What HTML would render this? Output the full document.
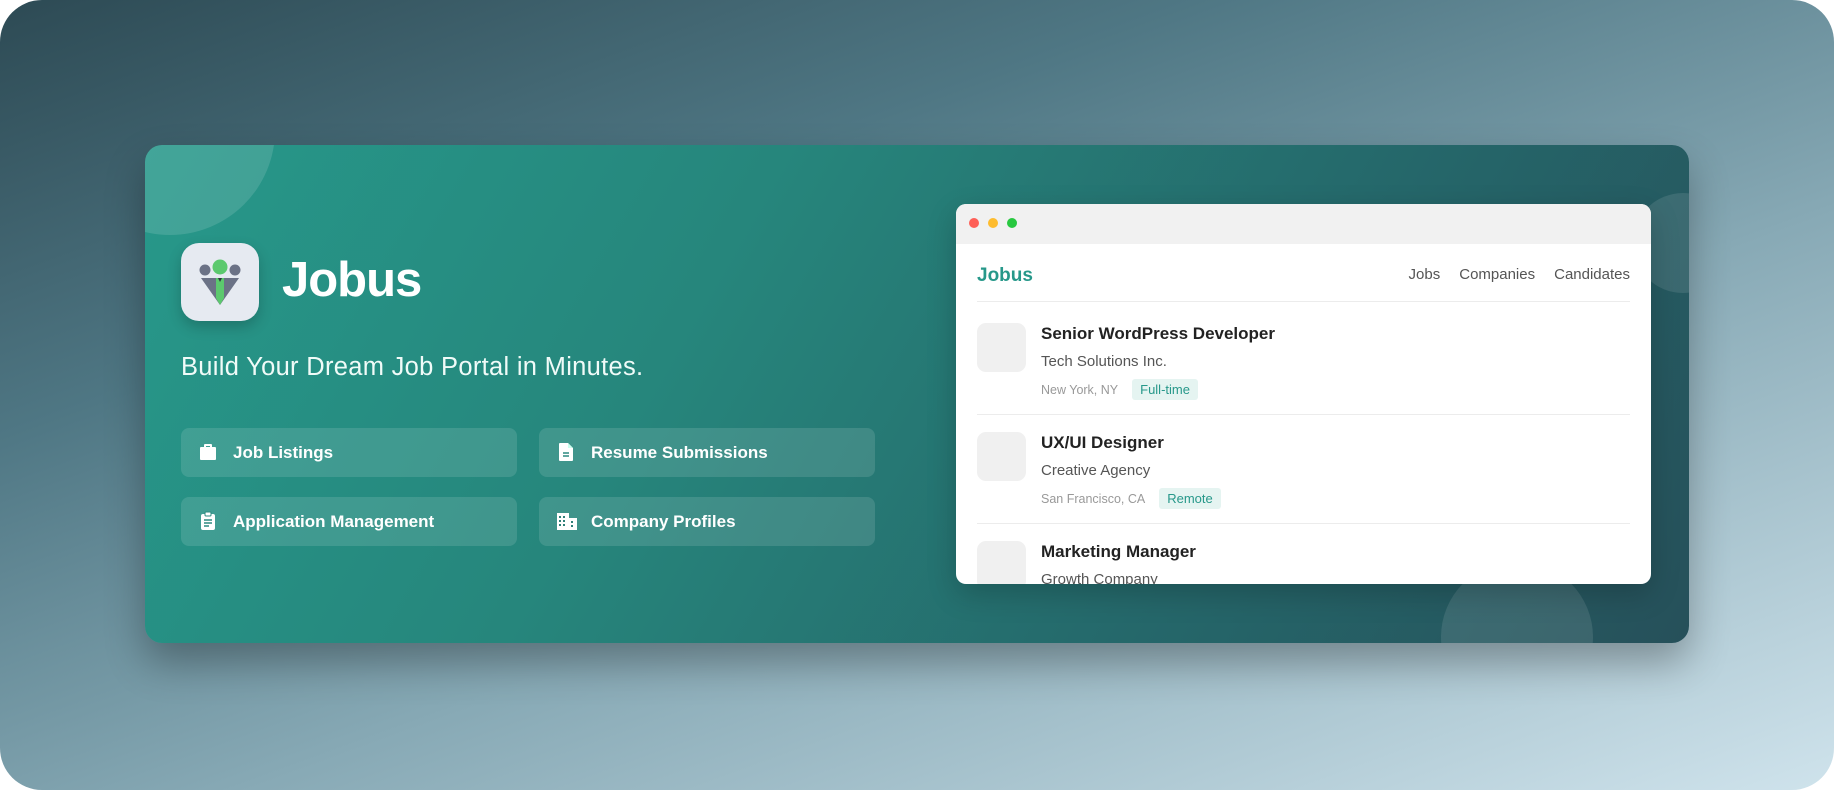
<!DOCTYPE html>
<html><head><meta charset="utf-8"><style>
*{margin:0;padding:0;box-sizing:border-box}
html,body{width:1834px;height:790px;overflow:hidden;background:#fff}
body{font-family:"Liberation Sans",sans-serif}
.bg{position:absolute;left:0;top:0;width:1834px;height:790px;border-radius:42px;background:linear-gradient(160deg,#2d4a54 0%,#4f7784 30%,#87a9b5 60%,#cfe3ec 100%);overflow:hidden}
.card{position:absolute;left:145px;top:145px;width:1544px;height:498px;border-radius:17px;background:linear-gradient(120deg,#27988a 0%,#26867c 35%,#25676a 70%,#26505a 100%);overflow:hidden;box-shadow:0 20px 40px rgba(0,0,0,.3)}
.circ{position:absolute;border-radius:50%;background:rgba(255,255,255,.1)}
.logo{position:absolute;left:36px;top:98px;width:78px;height:78px;border-radius:18px;background:#e6eaf1;box-shadow:0 6px 14px rgba(0,0,0,.2)}
.title{position:absolute;left:137px;top:107px;font-size:49px;font-weight:bold;color:#fff;letter-spacing:-1px}
.tag{position:absolute;left:36px;top:208px;font-size:25.5px;color:#f0fbf8;letter-spacing:0.3px}
.feat{position:absolute;width:336px;height:49px;border-radius:8px;background:rgba(255,255,255,.12);color:#fff;font-weight:bold;font-size:17px;display:flex;align-items:center;padding-left:52px}
.feat svg{position:absolute;left:17px;top:14px}
.br{position:absolute;left:811px;top:59px;width:695px;height:380px;border-radius:10px;background:#fff;overflow:hidden;box-shadow:0 10px 30px rgba(0,0,0,.2)}
.tb{height:40px;background:#f1f1f1;position:relative}
.dot{position:absolute;top:14px;width:10px;height:10px;border-radius:50%}
.brand{position:absolute;left:21px;top:61px;font-size:19px;font-weight:bold;color:#27988a}
.nav{position:absolute;right:21px;top:62px;font-size:15px;color:#555}
.nav span{margin-left:19px}
.hr{position:absolute;left:21px;right:21px;height:1px;background:#ececec}
.job{position:absolute;left:21px;width:650px}
.th{position:absolute;left:0;top:0;width:49px;height:49px;border-radius:9px;background:#f0f0f0}
.jt{position:absolute;left:64px;top:1px;font-size:17px;font-weight:bold;color:#222;white-space:nowrap}
.jc{position:absolute;left:64px;top:30px;font-size:15px;color:#555;white-space:nowrap}
.jl{position:absolute;left:64px;top:56px;font-size:12.5px;color:#999;white-space:nowrap}
.pill{display:inline-block;margin-left:14px;padding:3px 8px;background:#e5f4f1;color:#27988a;font-size:13px;border-radius:3px}
</style></head><body>
<div class="bg">
<div class="card">
  <div class="circ" style="left:-80px;top:-120px;width:210px;height:210px;background:rgba(255,255,255,.13)"></div>
  <div class="circ" style="left:1488px;top:48px;width:100px;height:100px"></div>
  <div class="circ" style="left:1296px;top:416px;width:152px;height:152px"></div>
  <div class="logo"><svg width="78" height="78" viewBox="0 0 78 78">
    <circle cx="24" cy="27" r="5.5" fill="#6b7286"/><circle cx="54" cy="27" r="5.5" fill="#6b7286"/>
    <circle cx="39" cy="24" r="7.5" fill="#5cc96e"/>
    <path d="M20 35 H58 L39 62 Z" fill="#6b7286"/>
    <path d="M35 35 H43 L43 55 L39 62 L35 55 Z" fill="#5cc96e"/>
    <path d="M37 35 h4 l-2 4z" fill="#2b3a3a"/>
  </svg></div>
  <div class="title">Jobus</div>
  <div class="tag">Build Your Dream Job Portal in Minutes.</div>
  <div class="feat" style="left:36px;top:283px"><svg width="20" height="20" viewBox="0 0 20 20"><path d="M7 2h6a1 1 0 0 1 1 1v2h3a1 1 0 0 1 1 1v11a1 1 0 0 1-1 1H3a1 1 0 0 1-1-1V6a1 1 0 0 1 1-1h3V3a1 1 0 0 1 1-1zm1 2v1h4V4z" fill="#fff"/></svg>Job Listings</div>
  <div class="feat" style="left:394px;top:283px"><svg width="20" height="20" viewBox="0 0 20 20"><path d="M4 1h8l5 5v12a1 1 0 0 1-1 1H4a1 1 0 0 1-1-1V2a1 1 0 0 1 1-1z" fill="#fff"/><path d="M7 11h6M7 14h6" stroke="#2d8a80" stroke-width="1.6"/><path d="M12 1v5h5" fill="#cfe" /></svg>Resume Submissions</div>
  <div class="feat" style="left:36px;top:352px"><svg width="20" height="20" viewBox="0 0 20 20"><rect x="3" y="3" width="14" height="16" rx="2" fill="#fff"/><rect x="7" y="1" width="6" height="4" rx="1" fill="#fff" stroke="#2d8a80" stroke-width="1"/><path d="M6 9h8M6 12h8M6 15h5" stroke="#2d8a80" stroke-width="1.5"/></svg>Application Management</div>
  <div class="feat" style="left:394px;top:352px"><svg width="22" height="20" viewBox="0 0 22 20"><path d="M1 2h12v17H1zM13 7h8v12h-8z" fill="#fff"/><g fill="#2f7f78"><rect x="3" y="5" width="2" height="2"/><rect x="7" y="5" width="2" height="2"/><rect x="3" y="9" width="2" height="2"/><rect x="7" y="9" width="2" height="2"/><rect x="3" y="13" width="2" height="2"/><rect x="7" y="13" width="2" height="2"/><rect x="15" y="10" width="2" height="2"/><rect x="15" y="14" width="2" height="2"/></g></svg>Company Profiles</div>

  <div class="br">
    <div class="tb"><div class="dot" style="left:13px;background:#fe5f57"></div><div class="dot" style="left:32px;background:#febc2e"></div><div class="dot" style="left:51px;background:#28c840"></div></div>
    <div class="brand">Jobus</div>
    <div class="nav"><span>Jobs</span><span>Companies</span><span>Candidates</span></div>
    <div class="hr" style="top:97px"></div>
    <div class="job" style="top:119px"><div class="th"></div><div class="jt">Senior WordPress Developer</div><div class="jc">Tech Solutions Inc.</div><div class="jl">New York, NY<span class="pill">Full-time</span></div></div>
    <div class="hr" style="top:210px"></div>
    <div class="job" style="top:228px"><div class="th"></div><div class="jt">UX/UI Designer</div><div class="jc">Creative Agency</div><div class="jl">San Francisco, CA<span class="pill">Remote</span></div></div>
    <div class="hr" style="top:319px"></div>
    <div class="job" style="top:337px"><div class="th"></div><div class="jt">Marketing Manager</div><div class="jc">Growth Company</div></div>
  </div>
</div>
</div>
</body></html>
